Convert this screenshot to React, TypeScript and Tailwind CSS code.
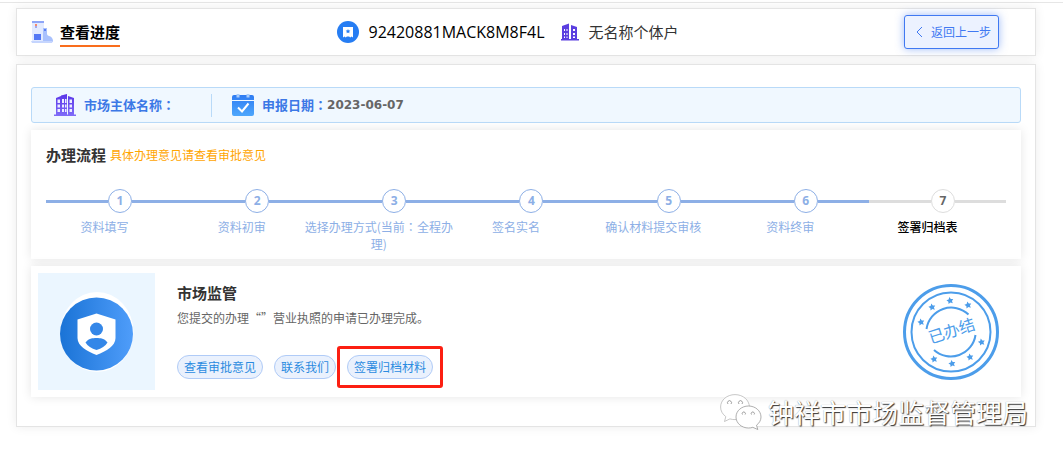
import React from 'react';
import clsx from 'clsx';

const steps = [
  { label: '资料填写', done: true },
  { label: '资料初审', done: true },
  { label: '选择办理方式(当前：全程办理)', done: true },
  { label: '签名实名', done: true },
  { label: '确认材料提交审核', done: true },
  { label: '资料终审', done: true },
  { label: '签署归档表', done: false },
];

const stars = [
  [18, 38], [29, 23], [47, 16.5], [65, 21],
  [31, 75], [49, 79.5], [67, 73], [78.5, 58],
];

function ProgressIcon() {
  return (
    <svg width="23" height="24" viewBox="0 0 23 24" aria-hidden="true">
      <rect x="1" y="1" width="12" height="21" fill="#e2eaff" />
      <rect x="1" y="1" width="12" height="2" fill="#8ea6f8" />
      <rect x="4" y="4" width="2" height="2" fill="#f5896c" />
      <rect x="4" y="6" width="2" height="2" fill="#a3a9e8" />
      <path d="M12 8h4v6c1 3 3 1 5 4 1 1 1 3 1 4H12z" fill="#a9c1fd" />
      <rect x="13" y="9" width="2" height="2" fill="#5c80f5" />
      <rect x="3" y="14" width="7" height="6" fill="#5478f5" />
      <path d="M0 21h22l-1 2H1z" fill="#c5d5fe" />
    </svg>
  );
}

function LicenseIcon() {
  return (
    <svg width="22" height="22" viewBox="0 0 22 22" aria-hidden="true">
      <circle cx="11" cy="11" r="11" fill="#267df3" />
      <path d="M6 6h10v10.500l-1.500-1-1.200 1-1.200-1h-2.200l-1.200 1-1.200-1-1.500 1z" fill="#fff" />
      <path d="M11 8l.7 1.400 1.600.2-1.100 1.100.2 1.500-1.400-.7-1.400.7.2-1.500-1.100-1.100 1.600-.2z" fill="#267df3" />
    </svg>
  );
}

function TowerIcon() {
  return (
    <svg width="18" height="18" viewBox="0 0 18 18" aria-hidden="true">
      <path d="M1 17V3L8 .5V17zM10 2l6 2v13h-6zM0 16h18v1.500H0z" fill="#5b3fe0" />
      <path d="M3 6h1v2H3zM5.500 6h1v2h-1zM3 10h1v2H3zM5.500 10h1v2h-1zM3 13.500h1v1.500H3zM5.500 13.500h1v1.500h-1zM12 6h2v2h-2zM12 10h2v2h-2zM12 13.500h2v1.500h-2z" fill="#fff" />
    </svg>
  );
}

function OfficeIcon() {
  return (
    <svg width="22" height="22" viewBox="0 0 22 22" aria-hidden="true">
      <defs>
        <linearGradient id="office" x1="0" y1="0" x2="0" y2="1">
          <stop offset="0" stopColor="#5a35e8" />
          <stop offset="1" stopColor="#7f6cf8" />
        </linearGradient>
      </defs>
      <path d="M2 21V4l5-2v19zM7 21V1.500L13 0v21zM14 2l6 2v17h-6zM0 20.500h22V22H0z" fill="url(#office)" />
      <path d="M3.500 5.500h2.500V9H3.500zM3.500 10.500H6v3H3.500zM3.500 15H6v3H3.500zM8 5h2v4H8zM8 10.500h2v3H8zM8 15h2v3H8zM11 5h1.500v4H11zM11 10.500h1.500v3H11zM11 15h1.500v3H11zM15.500 5.500H18V9h-2.500zM15.500 10.500H18v3h-2.500zM15.500 15H18v3h-2.500z" fill="#eceeff" />
    </svg>
  );
}

function CalendarIcon() {
  return (
    <svg width="22" height="22" viewBox="0 0 22 22" aria-hidden="true">
      <defs>
        <linearGradient id="calendar" x1="0" y1="0" x2="0" y2="1">
          <stop offset="0" stopColor="#2e7cf3" />
          <stop offset="1" stopColor="#4ea7fc" />
        </linearGradient>
      </defs>
      <path d="M0 3a2 2 0 0 1 2-2h18a2 2 0 0 1 2 2v3H0zM0 7h22v13a2 2 0 0 1-2 2H2a2 2 0 0 1-2-2z" fill="url(#calendar)" />
      <path d="M4.500 0h3v3.500h-3zM14.500 0h3v3.500h-3z" fill="#a9cdfb" />
      <path d="M6 13.500l4 4 6.500-8" fill="none" stroke="#fff" strokeWidth="2" />
    </svg>
  );
}

function ShieldIcon() {
  return (
    <svg width="74" height="82" viewBox="0 0 74 82" aria-hidden="true">
      <defs>
        <linearGradient id="shield" x1="0" y1="0" x2="1" y2="0">
          <stop offset="0" stopColor="#1a73d6" />
          <stop offset="1" stopColor="#4f9dfa" />
        </linearGradient>
      </defs>
      <ellipse cx="37" cy="41" rx="36.500" ry="40" fill="#fff" />
      <circle cx="36.500" cy="43" r="36.500" fill="url(#shield)" />
      <path d="M36.500 22.500l19 6V47c0 8-9 13-19 17-10-4-19-9-19-17V28.500z" fill="#fff" />
      <circle cx="36.500" cy="38" r="6.500" fill="#3487e8" />
      <path d="M25.500 51.500c3-4 7-4.500 11-4.500s8 .5 11 4.500c-2 3.500-6 6-11 7.500-5-1.500-9-4-11-7.500z" fill="#3487e8" />
    </svg>
  );
}

function Seal() {
  return (
    <svg width="96" height="96" viewBox="0 0 96 96" role="img" aria-label="已办结">
      <g fill="none" stroke="#4c9dea">
        <circle cx="48" cy="48" r="46.500" strokeWidth="3" />
        <circle cx="48" cy="48" r="39.500" strokeWidth="2" />
        <path d="M23.500 45A25 25 0 0 1 65.500 30.500" strokeWidth="2" />
        <path d="M72.500 51A25 25 0 0 1 31 66" strokeWidth="2" />
      </g>
      {stars.map(([x, y]) => (
        <path
          key={x}
          transform={`translate(${x} ${y}) rotate(-12)`}
          d="M0-3.500l1.100 2.200 2.400.4-1.700 1.700.4 2.400L0 2.100l-2.200 1.100.4-2.400L-3.500-.9l2.400-.4z"
          fill="#4c9dea"
        />
      ))}
      <text
        x="49"
        y="53"
        textAnchor="middle"
        transform="rotate(-18 48 48)"
        fill="#4c9dea"
        className="font-['Noto_Sans_CJK_SC',sans-serif] text-base"
      >
        已办结
      </text>
    </svg>
  );
}

function WeChatIcon() {
  return (
    <svg width="42" height="36" viewBox="0 0 42 36" aria-hidden="true">
      <g fill="#fff" stroke="#b0b0b0" strokeWidth="0.7">
        <path d="M15 .6C7 .6.6 6 .6 13c0 4 2 7.300 5.200 9.600L4.500 27.500l5.400-2.600c1.600.5 3.300.7 5.100.7 8 0 14.400-5.500 14.400-12.500S23 .6 15 .6z" />
        <path d="M28.500 12C21.700 12 16 16.800 16 23s5.700 11 12.500 11c1.500 0 3-.2 4.300-.7l5 2.200-1.300-4.300c2.700-2 4.500-4.900 4.500-8.200 0-6.200-5.700-11-12.500-11z" stroke="#8c8c8c" />
        <path d="M8 10a2 2 0 1 1 3 0M19 10a2 2 0 1 1 3 0M22.500 20.500a1.600 1.600 0 1 1 2.600 0M31.500 20.500a1.600 1.600 0 1 1 2.600 0" stroke="#777" />
      </g>
    </svg>
  );
}

// Full-width colon, centred in its square
function Colon() {
  return <span className="font-['Noto_Sans_CJK_TC',sans-serif]">：</span>;
}

function PillButton({ children }: { children: React.ReactNode }) {
  return (
    <button
      type="button"
      className="h-6 rounded-full border border-[#b0cbf7] bg-[#eaf1fd] px-[6px] text-xs leading-5 text-[#2b8be0]"
    >
      {children}
    </button>
  );
}

export default function App() {
  return (
    <div className="border-t border-[#e6e6e6] mt-[2px] bg-white pt-[5px] pr-[27px] pl-4 pb-8 font-['Noto_Sans_CJK_SC',sans-serif] text-xs text-[#333]">

      {/* Header */}
      <header className="flex h-12 items-center justify-between border border-[#e4e4e4] bg-white pr-9 pl-[14px] shadow-[0_0_10px_rgba(0,0,0,0.08)]">
        <div className="flex items-center gap-[6px]">
          <ProgressIcon />
          <h1 className="border-b-2 border-[#f96d1d] pt-[3px] pb-px text-[15px] leading-6 font-bold text-black">查看进度</h1>
        </div>
        <div className="mr-2 flex items-center">
          <LicenseIcon />
          <span className="ml-[9px] font-['Open_Sans',sans-serif] text-base leading-6 text-black">92420881MACK8M8F4L</span>
          <span className="ml-4 mr-[10px]"><TowerIcon /></span>
          <span className="text-[15px] leading-6">无名称个体户</span>
        </div>
        <button
          type="button"
          className="flex h-[34px] items-center gap-2 rounded-[3px] border border-[#4079f2] bg-[#ecf2ff] pr-[7px] pl-[11px] text-xs text-[#4079f2] shadow-[0_0_8px_rgba(64,121,242,0.5)]"
        >
          <svg width="7" height="12" viewBox="0 0 7 12" aria-hidden="true">
            <path d="M6 1L1 6l5 5" fill="none" stroke="#4079f2" />
          </svg>
          返回上一步
        </button>
      </header>

      <main className="relative mt-2 border border-[#e4e4e4] bg-white px-[14px] pt-[22px] pb-[29px] shadow-[0_0_10px_rgba(0,0,0,0.08)]">

        {/* Applicant info */}
        <div className="flex h-9 items-center rounded-[3px] border border-[#b9daf8] bg-[#f0f8ff] pl-[22px] text-[13px] leading-5 font-bold text-[#3c78e6]">
          <OfficeIcon />
          <span className="ml-2">市场主体名称<Colon /></span>
          <span className="mr-5 ml-9 h-[23px] w-px bg-[#b9daf8]"></span>
          <CalendarIcon />
          <span className="ml-2">申报日期<Colon /></span>
          <span className="font-['DejaVu_Sans',sans-serif] text-xs text-[#666]">2023-06-07</span>
        </div>

        {/* Steps */}
        <section className="mt-[7px] bg-white px-[15px] pt-[13px] pb-[7px] shadow-[0_0_10px_rgba(0,0,0,0.1)]">
          <div className="flex items-center gap-1 leading-6">
            <h2 className="text-[15px] font-bold">办理流程</h2>
            <span className="text-[#ffa500]">具体办理意见请查看审批意见</span>
          </div>
          <ol className="mt-[22px] flex">
            {steps.map((step, i) => (
              <li key={i} className="min-w-0 flex-1">
                <div className="flex items-center">
                  <span className={clsx('h-[3px] w-[62px]', step.done ? 'bg-[#8dafe6]' : 'bg-[#dddddd]')}></span>
                  <span
                    className={clsx(
                      "flex size-6 items-center justify-center rounded-full border font-['Open_Sans',sans-serif] font-bold",
                      step.done ? 'border-[#8dafe6] text-[#8dafe6]' : 'border-[#dddddd] text-[#666]'
                    )}
                  >
                    {i + 1}
                  </span>
                  <span className={clsx('h-[3px] flex-1', step.done ? 'bg-[#8dafe6]' : 'bg-[#dddddd]')}></span>
                </div>
                <p className={clsx('mt-[5px] -ml-5 text-center leading-[17px]', step.done ? 'text-[#8dafe6]' : 'font-medium text-black')}>
                  {step.label.split('：').map((part, n) => (
                    <React.Fragment key={n}>
                      {n > 0 && <Colon />}
                      {part}
                    </React.Fragment>
                  ))}
                </p>
              </li>
            ))}
          </ol>
        </section>

        {/* Result */}
        <section className="mt-[7px] flex items-center bg-white py-[7px] pr-[22px] pl-[7px] shadow-[0_0_10px_rgba(0,0,0,0.1)]">
          <div className="flex size-[117px] items-center justify-center bg-[#ebf6ff]">
            <ShieldIcon />
          </div>
          <div className="ml-[22px] flex-1 self-start pt-2">
            <h2 className="text-[15px] leading-6 font-bold">市场监管</h2>
            <p className="mt-1 leading-[18px] text-[#666]">您提交的办理“”营业执照的申请已办理完成。</p>
            <div className="mt-7 flex gap-[11px]">
              <PillButton>查看审批意见</PillButton>
              <PillButton>联系我们</PillButton>
              <div className="relative">
                <PillButton>签署归档材料</PillButton>
                <span className="pointer-events-none absolute -inset-x-[10px] -inset-y-[9px] rounded-[3px] border-3 border-[#fc1f12]"></span>
              </div>
            </div>
          </div>
          <Seal />
        </section>

        {/* Publisher mark */}
        <div className="absolute right-[7px] -bottom-1 flex items-center gap-[6px]">
          <WeChatIcon />
          <span className="text-[26px] leading-9 text-white [text-shadow:1px_1px_1px_#333,0_0_1px_#999]">钟祥市市场监督管理局</span>
        </div>
      </main>
    </div>
  );
}
